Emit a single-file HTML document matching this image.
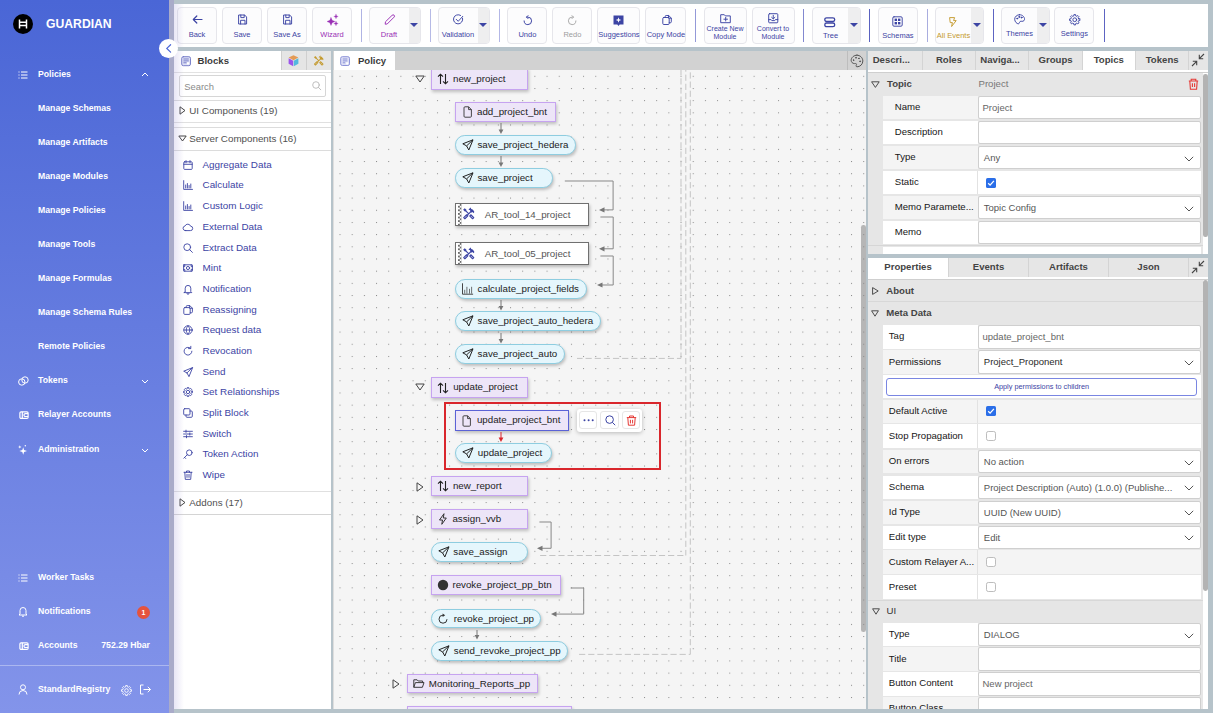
<!DOCTYPE html>
<html><head><meta charset="utf-8"><style>
*{box-sizing:border-box;margin:0;padding:0}
html,body{width:1213px;height:713px;overflow:hidden}
body{position:relative;background:#b6c3ca;font-family:"Liberation Sans",sans-serif;}
.abs{position:absolute}
svg{position:absolute;overflow:visible}
#sb{position:absolute;left:0;top:0;width:169px;height:713px;background:linear-gradient(180deg,#4a66d6 0%,#8394ea 100%);color:#fff}
#sb .it{position:absolute;left:38px;font-weight:bold;font-size:8.7px;line-height:12px;white-space:nowrap;transform:translateY(-6.7px)}
#shadowstrip{position:absolute;left:169px;top:0;width:5px;height:713px;background:#a9abc9}
#tb{position:absolute;left:174px;top:4px;width:1034px;height:43px;background:#fff}
.btn{position:absolute;top:3px;height:36.5px;border:1px solid #e6e6eb;border-radius:4px;background:#fcfcfd;text-align:center;font-size:7.3px;color:#3c44a4;}
.btn .lb{position:absolute;left:0;right:0;top:24px;line-height:8px;white-space:nowrap}
.dd{position:absolute;top:0;right:0;width:11.5px;height:34.5px;background:#eeeeef;border-radius:0 3px 3px 0}
.dd:after{content:"";position:absolute;left:1.8px;top:15px;border-left:4.2px solid transparent;border-right:4.2px solid transparent;border-top:4.8px solid #3c44a4}
.sep{position:absolute;top:5px;width:1px;height:33px;background:#7a80cc}
#blocks{position:absolute;left:174px;top:51px;width:157px;height:658px;background:#fff;overflow:hidden}
#canvas{position:absolute;left:333px;top:51px;width:533px;height:658px;background:#f5f5f5;overflow:hidden}
#rtop{position:absolute;left:868px;top:51px;width:340px;height:203px;background:#e6e6e6;overflow:hidden}
#rbot{position:absolute;left:868px;top:258px;width:340px;height:451px;background:#e6e6e6;overflow:hidden}
</style></head><body>
<div id="sb"><svg style="left:13px;top:14px" width="20" height="20" viewBox="0 0 20 20"><circle cx="10" cy="10" r="10" fill="#000"/><path d="M6.5 5.5v9M13.5 5.5v9M6.5 8.2h7M6.5 11.6h7" stroke="#fff" stroke-width="1.5" fill="none"/></svg>
<div class="abs" style="left:46px;top:17px;font-size:12.2px;font-weight:bold;line-height:14px">GUARDIAN</div>
<svg style="left:18px;top:69.5px" width="10" height="10" viewBox="0 0 10 10" fill="none" stroke="#fff" stroke-width="1"><path d="M3 2h6.5M3 5h6.5M3 8h6.5"/><path d="M0.5 2h1M0.5 5h1M0.5 8h1"/></svg>
<div class="it" style="top:74.5px">Policies</div>
<svg style="left:141px;top:72px" width="8" height="5" viewBox="0 0 8 5" fill="none" stroke="#fff" stroke-width="1"><path d="M1 4l3-3 3 3"/></svg>
<div class="it" style="top:108.8px">Manage Schemas</div>
<div class="it" style="top:142.5px">Manage Artifacts</div>
<div class="it" style="top:176.5px">Manage Modules</div>
<div class="it" style="top:210.5px">Manage Policies</div>
<div class="it" style="top:244.5px">Manage Tools</div>
<div class="it" style="top:278.5px">Manage Formulas</div>
<div class="it" style="top:312.7px">Manage Schema Rules</div>
<div class="it" style="top:347px">Remote Policies</div>
<svg style="left:18px;top:376px" width="11" height="10" viewBox="0 0 11 10" fill="none" stroke="#fff" stroke-width="1"><circle cx="3.8" cy="6" r="3.2"/><circle cx="7" cy="4" r="3.2"/></svg>
<div class="it" style="top:381.2px">Tokens</div>
<svg style="left:141px;top:379px" width="8" height="5" viewBox="0 0 8 5" fill="none" stroke="#fff" stroke-width="1"><path d="M1 1l3 3 3-3"/></svg>
<svg style="left:18.5px;top:410.3px" width="10" height="10" viewBox="0 0 10 10" fill="none" stroke="#fff" stroke-width="1.2"><rect x="0.9" y="1.8" width="8.2" height="6.6" rx="1.2"/><path d="M9.1 3.6H6.4a1.1 1.1 0 0 0 0 2.9h2.7M3.3 1.8v6.6"/></svg>
<div class="it" style="top:415.3px">Relayer Accounts</div>
<svg style="left:18px;top:444px" width="10" height="11" viewBox="0 0 10 11" fill="#fff"><path d="M5.2 3.2L6.1 6.1 9 7 6.1 7.9 5.2 10.8 4.3 7.9 1.4 7 4.3 6.1z"/><path d="M1.8 1.2L2.3 2.4 3.5 2.9 2.3 3.4 1.8 4.6 1.3 3.4 0.1 2.9 1.3 2.4z"/><circle cx="7.3" cy="1.8" r="0.75"/></svg>
<div class="it" style="top:449.5px">Administration</div>
<svg style="left:141px;top:447.5px" width="8" height="5" viewBox="0 0 8 5" fill="none" stroke="#fff" stroke-width="1"><path d="M1 1l3 3 3-3"/></svg>
<svg style="left:18px;top:572.8px" width="10" height="10" viewBox="0 0 10 10" fill="none" stroke="#fff" stroke-width="1"><path d="M3 2h6.5M3 5h6.5M3 8h6.5"/><path d="M0.5 2h1M0.5 5h1M0.5 8h1"/></svg>
<div class="it" style="top:577.8px">Worker Tasks</div>
<svg style="left:18px;top:606px" width="10" height="11" viewBox="0 0 10 11" fill="none" stroke="#fff" stroke-width="1"><path d="M2 8V4.5a3 3 0 0 1 6 0V8l1 1H1z"/><path d="M4 10.2h2"/></svg>
<div class="it" style="top:612px">Notifications</div>
<div class="abs" style="left:137px;top:605.5px;width:13px;height:13px;border-radius:50%;background:#e5533d;font-size:7px;font-weight:bold;text-align:center;line-height:13px">1</div>
<svg style="left:18.5px;top:640.9px" width="10" height="10" viewBox="0 0 10 10" fill="none" stroke="#fff" stroke-width="1.2"><rect x="0.9" y="1.8" width="8.2" height="6.6" rx="1.2"/><path d="M9.1 3.6H6.4a1.1 1.1 0 0 0 0 2.9h2.7M3.3 1.8v6.6"/></svg>
<div class="it" style="top:645.9px">Accounts</div>
<div class="it" style="top:645.9px;left:auto;right:19px">752.29 Hbar</div>
<div class="abs" style="left:0;top:665px;width:169px;height:1px;background:rgba(255,255,255,0.35)"></div>
<svg style="left:18px;top:684px" width="10" height="11" viewBox="0 0 10 11" fill="none" stroke="#fff" stroke-width="1"><circle cx="5" cy="3.3" r="2.5"/><path d="M1 10.5a4 4 0 0 1 8 0"/></svg>
<div class="it" style="top:689.9px">StandardRegistry</div>
<svg style="left:121px;top:684.5px" width="11" height="11" viewBox="0 0 11 11" fill="none" stroke="#fff" stroke-width="0.9"><circle cx="5.5" cy="5.5" r="1.8"/><path d="M10.43 4.68 L10.43 6.32 L9.20 6.36 L8.72 7.51 L9.57 8.41 L8.41 9.57 L7.51 8.72 L6.36 9.20 L6.32 10.43 L4.68 10.43 L4.64 9.20 L3.49 8.72 L2.59 9.57 L1.43 8.41 L2.28 7.51 L1.80 6.36 L0.57 6.32 L0.57 4.68 L1.80 4.64 L2.28 3.49 L1.43 2.59 L2.59 1.43 L3.49 2.28 L4.64 1.80 L4.68 0.57 L6.32 0.57 L6.36 1.80 L7.51 2.28 L8.41 1.43 L9.57 2.59 L8.72 3.49 L9.20 4.64z"/></svg>
<svg style="left:139px;top:684px" width="12" height="11" viewBox="0 0 12 11" fill="none" stroke="#fff" stroke-width="1"><path d="M4.5 1H1.5v9h3"/><path d="M4.5 5.5h7M8.8 2.8l2.7 2.7-2.7 2.7"/></svg>
<div class="abs" style="left:158.8px;top:38.8px;width:19.5px;height:19.5px;border-radius:50%;background:#fff;z-index:5"><svg style="left:7px;top:5.6px" width="6" height="9" viewBox="0 0 6 9" fill="none" stroke="#4a66d6" stroke-width="1.2" stroke-linecap="round"><path d="M4.6 0.7L0.8 4.4 4.6 8.1"/></svg></div></div>
<div id="shadowstrip"></div>
<div id="tb"><div class="btn" style="left:3px;width:40px;color:#3c44a4"><svg style="left:13.50px;top:7.20px" width="11" height="9" viewBox="0 0 11 9" fill="none" stroke="#3c44a4" stroke-width="1.2" stroke-linecap="round" stroke-linejoin="round"><path d="M10 4.5H1.3M4.8 1L1.3 4.5 4.8 8"/></svg><div class="lb" style="top:22.5px;font-size:7.5px;">Back</div></div>
<div class="btn" style="left:48px;width:40px;color:#3c44a4"><svg style="left:14.50px;top:5.90px" width="9.5" height="11" viewBox="0 0 9.5 11" fill="none" stroke="#3c44a4" stroke-width="0.95" stroke-linecap="round" stroke-linejoin="round"><path d="M1 1h5.6l2 2v7H1z"/><path d="M2.8 1v2.6h3.4V1M2.6 10V6.3h4.4V10"/></svg><div class="lb" style="top:22.5px;font-size:7.5px;">Save</div></div>
<div class="btn" style="left:93px;width:40px;color:#3c44a4"><svg style="left:14.50px;top:5.90px" width="9.5" height="11" viewBox="0 0 9.5 11" fill="none" stroke="#3c44a4" stroke-width="0.95" stroke-linecap="round" stroke-linejoin="round"><path d="M1 1h5.6l2 2v7H1z"/><path d="M2.8 1v2.6h3.4V1M2.6 10V6.3h4.4V10"/></svg><div class="lb" style="top:22.5px;font-size:7.5px;">Save As</div></div>
<div class="btn" style="left:138px;width:40px;color:#9a2fb5"><svg style="left:12.50px;top:6.40px" width="13" height="12" viewBox="0 0 13 12" fill="#9a2fb5" stroke="#9a2fb5" stroke-width="0.3" stroke-linecap="round" stroke-linejoin="round"><path d="M5 3.5L6.2 6.3 9 7.5 6.2 8.7 5 11.5 3.8 8.7 1 7.5 3.8 6.3z"/><path d="M10 0.3L10.6 1.9 12.2 2.5 10.6 3.1 10 4.7 9.4 3.1 7.8 2.5 9.4 1.9z"/><path d="M10 7.3L10.6 8.9 12.2 9.5 10.6 10.1 10 11.7 9.4 10.1 7.8 9.5 9.4 8.9z"/></svg><div class="lb" style="top:22.5px;font-size:7.5px;">Wizard</div></div>
<div class="sep" style="left:187px;background:#b0b4e4"></div>
<div class="btn" style="left:195px;width:52px;color:#9a2fb5"><svg style="left:14.00px;top:5.90px" width="11.5" height="11" viewBox="0 0 11.5 11" fill="none" stroke="#9a2fb5" stroke-width="0.95" stroke-linecap="round" stroke-linejoin="round"><path d="M8.2 1.2a1.3 1.3 0 0 1 1.9 1.9L3.2 10 1.2 10.2 1.4 8.2z"/></svg><div class="lb" style="top:22.5px;font-size:7.5px;right:12px;">Draft</div><div class="dd"></div></div>
<div class="sep" style="left:256px;background:#b6bae6"></div>
<div class="btn" style="left:264px;width:52px;color:#3c44a4"><svg style="left:13.80px;top:6.20px" width="11" height="11" viewBox="0 0 11 11" fill="none" stroke="#3c44a4" stroke-width="0.95" stroke-linecap="round" stroke-linejoin="round"><path d="M9.6 4.2A4.6 4.6 0 1 1 7.6 1.4"/><path d="M3.2 5.3l2 2 4.6-5"/></svg><div class="lb" style="top:22.5px;font-size:7.5px;right:12px;">Validation</div><div class="dd"></div></div>
<div class="sep" style="left:324.5px;background:#b3b7e6"></div>
<div class="btn" style="left:333.4px;width:40px;color:#3c44a4"><svg style="left:14.30px;top:6.60px" width="10" height="10.5" viewBox="0 0 10 10.5" fill="none" stroke="#3c44a4" stroke-width="1" stroke-linecap="round" stroke-linejoin="round"><path d="M3.6 2.1H4.8A3.75 3.75 0 1 1 1.1 5.9"/><path d="M5 0.6L3.5 2.1 5 3.6"/></svg><div class="lb" style="top:22.5px;font-size:7.5px;">Undo</div></div>
<div class="btn" style="left:378.4px;width:40px;color:#9d9d9d"><svg style="left:13.80px;top:6.60px" width="10" height="10.5" viewBox="0 0 10 10.5" fill="none" stroke="#ababab" stroke-width="1" stroke-linecap="round" stroke-linejoin="round"><path d="M6.4 2.1H5.2A3.75 3.75 0 1 0 8.9 5.9"/><path d="M5 0.6L6.5 2.1 5 3.6"/></svg><div class="lb" style="top:22.5px;font-size:7.5px;">Redo</div></div>
<div class="btn" style="left:423.3px;width:43px;color:#3c44a4"><svg style="left:15.20px;top:7.40px" width="11" height="11.5" viewBox="0 0 11 11.5" fill="none" stroke="#3c44a4" stroke-width="0.95" stroke-linecap="round" stroke-linejoin="round"><path d="M0.5 0.5h10v9H6.7l-1.2 1.6-1.2-1.6H0.5z" fill="#3c44a4" stroke="none"/><path d="M5.5 2.2L6.2 4.3 8.3 5 6.2 5.7 5.5 7.8 4.8 5.7 2.7 5 4.8 4.3z" fill="#fff" stroke="none"/></svg><div class="lb" style="top:22.5px;font-size:7.5px;">Suggestions</div></div>
<div class="btn" style="left:471.4px;width:41px;color:#3c44a4"><svg style="left:15.20px;top:7.00px" width="10" height="10" viewBox="0 0 10 10" fill="none" stroke="#3c44a4" stroke-width="0.95" stroke-linecap="round" stroke-linejoin="round"><path d="M3.2 2.5V1.5a1 1 0 0 1 1-1h2.5l2.6 2.6v3.7a1 1 0 0 1-1 1H7.2"/><rect x="0.8" y="2.5" width="6.4" height="7" rx="1"/><path d="M6.5 0.6v2.6h2.7"/></svg><div class="lb" style="top:22.5px;font-size:7.5px;">Copy Mode</div></div>
<div class="sep" style="left:521.4px;background:#9499d8"></div>
<div class="btn" style="left:529.5px;width:43px;color:#3c44a4"><svg style="left:15.00px;top:5.70px" width="11" height="9" viewBox="0 0 11 9" fill="none" stroke="#3c44a4" stroke-width="0.95" stroke-linecap="round" stroke-linejoin="round"><path d="M0.7 8.3V0.7h3.6l1 1.2h5v6.4z"/><path d="M5.7 3.4v3.6M3.9 5.2h3.6"/></svg><div class="lb" style="top:16.5px;font-size:7px;">Create New<br>Module</div></div>
<div class="btn" style="left:577.5px;width:43px;color:#3c44a4"><svg style="left:15.20px;top:4.70px" width="10.5" height="10.5" viewBox="0 0 10.5 10.5" fill="none" stroke="#3c44a4" stroke-width="0.95" stroke-linecap="round" stroke-linejoin="round"><rect x="0.7" y="0.7" width="9.1" height="9.1" rx="0.8"/><path d="M5.25 2.3v3.4M3.6 4.3l1.65 1.6 1.65-1.6M0.7 6.6h2.4l0.7 1h2.9l0.7-1h2.4"/></svg><div class="lb" style="top:16.5px;font-size:7px;">Convert to<br>Module</div></div>
<div class="sep" style="left:629.4px;background:#8288d0"></div>
<div class="btn" style="left:638.3px;width:48.5px;color:#3c44a4"><svg style="left:11.20px;top:8.70px" width="11.5" height="10.5" viewBox="0 0 11.5 10.5" fill="none" stroke="#3c44a4" stroke-width="1.3" stroke-linecap="round" stroke-linejoin="round"><rect x="0.8" y="0.8" width="9.9" height="3.7" rx="1.8"/><rect x="0.8" y="6" width="9.9" height="3.7" rx="1.8"/></svg><div class="lb" style="top:23.5px;font-size:7.5px;right:12px;">Tree</div><div class="dd"></div></div>
<div class="sep" style="left:695.4px;background:#5a62c0"></div>
<div class="btn" style="left:704px;width:40px;color:#3c44a4"><svg style="left:12.50px;top:8.20px" width="11" height="11" viewBox="0 0 11 11" fill="none" stroke="#3c44a4" stroke-width="0.95" stroke-linecap="round" stroke-linejoin="round"><rect x="0.8" y="0.8" width="9.4" height="9.4" rx="1.2"/><rect x="2.6" y="2.6" width="2.4" height="2.4" fill="#3c44a4" stroke="none"/><rect x="2.6" y="6" width="2.4" height="2.4" fill="#3c44a4" stroke="none"/><rect x="6" y="2.6" width="2.4" height="2.4" fill="#3c44a4" stroke="none"/><rect x="6" y="6" width="2.4" height="2.4" fill="#3c44a4" stroke="none"/></svg><div class="lb" style="top:24px;font-size:7.5px;">Schemas</div></div>
<div class="sep" style="left:752.8px;background:#a9addf"></div>
<div class="btn" style="left:761.3px;width:48.5px;color:#c49a2e"><svg style="left:13.20px;top:9.20px" width="8" height="10" viewBox="0 0 8 10" fill="none" stroke="#c49a2e" stroke-width="0.95" stroke-linecap="round" stroke-linejoin="round"><path d="M1 0.6h4.6L4.6 3.6h2.6L2.6 9.5 3.4 5.6H1.6z"/></svg><div class="lb" style="top:24px;font-size:7.5px;right:12px;">All Events</div><div class="dd"></div></div>
<div class="sep" style="left:818.7px;background:#5d64c2"></div>
<div class="btn" style="left:827.2px;width:48.5px;color:#3c44a4"><svg style="left:12.10px;top:6.40px" width="11.5" height="10.5" viewBox="0 0 11.5 10.5" fill="none" stroke="#3c44a4" stroke-width="0.95" stroke-linecap="round" stroke-linejoin="round"><path d="M5.6 0.7C2.8 0.7 0.7 2.8 0.7 5.2c0 2.8 2.4 4.6 3.6 4.6 1.2 0 .9-1.5 1.8-2.3.9-.8 2.6.5 3.8-.8 1.2-1.3.6-3-.6-4.4C8.4 1.3 7 .7 5.6.7z"/><circle cx="3.2" cy="4.6" r=".5" fill="#3c44a4"/><circle cx="5.2" cy="2.9" r=".5" fill="#3c44a4"/><circle cx="7.6" cy="3.6" r=".5" fill="#3c44a4"/></svg><div class="lb" style="top:22px;font-size:7.5px;right:12px;">Themes</div><div class="dd"></div></div>
<div class="btn" style="left:880.4px;width:40px;color:#3c44a4"><svg style="left:13.90px;top:5.90px" width="11.5" height="11.5" viewBox="0 0 11.5 11.5" fill="none" stroke="#3c44a4" stroke-width="0.95" stroke-linecap="round" stroke-linejoin="round"><circle cx="5.75" cy="5.75" r="1.9"/><path d="M10.88 4.90 L10.88 6.60 L9.65 6.65 L9.14 7.87 L9.98 8.77 L8.77 9.98 L7.87 9.14 L6.65 9.65 L6.60 10.88 L4.90 10.88 L4.85 9.65 L3.63 9.14 L2.73 9.98 L1.52 8.77 L2.36 7.87 L1.85 6.65 L0.62 6.60 L0.62 4.90 L1.85 4.85 L2.36 3.63 L1.52 2.73 L2.73 1.52 L3.63 2.36 L4.85 1.85 L4.90 0.62 L6.60 0.62 L6.65 1.85 L7.87 2.36 L8.77 1.52 L9.98 2.73 L9.14 3.63 L9.65 4.85z"/></svg><div class="lb" style="top:22px;font-size:7.5px;">Settings</div></div>
<div class="sep" style="left:929.5px;background:#5d64c2"></div>
<div class="abs" style="left:0;top:0;width:10px;height:43px;background:linear-gradient(90deg,rgba(150,140,210,0.22),rgba(150,140,210,0))"></div></div>
<div id="blocks"><svg style="left:7.00px;top:5.20px" width="10.2" height="10.4" viewBox="0 0 10.2 10.4" fill="#dfe1f5" stroke="#6d74c4" stroke-width="0.9" stroke-linecap="round" stroke-linejoin="round"><rect x="0.7" y="0.7" width="8.8" height="9" rx="1.6"/><path d="M2.8 3h4.6M2.8 4.9h4.6M2.8 6.8h2.4"/><rect x="6" y="6.4" width="2" height="2" fill="#fff" stroke="none"/></svg>
<div class="abs" style="left:23.5px;top:2.7px;font-size:9.6px;font-weight:bold;color:#3a3a3a;line-height:13px">Blocks</div>
<div class="abs" style="left:107px;top:0;width:25px;height:19px;background:#e5e5e5;border-left:1px solid #cfcfcf"></div>
<div class="abs" style="left:132px;top:0;width:25px;height:19px;background:#e5e5e5;border-left:1px solid #cfcfcf"></div>
<svg style="left:114px;top:3.8px" width="11" height="11.5" viewBox="0 0 11 11.5"><path d="M5.5 0.3L10.4 2.6 5.5 5.2 0.6 2.6z" fill="#e39a55"/><path d="M0.6 3.2L5.2 5.7V11.2L0.6 8.7z" fill="#9c55ea"/><path d="M5.8 5.7L10.4 3.2V8.7L5.8 11.2z" fill="#52b9df"/></svg>
<svg style="left:138.5px;top:4px" width="11.5" height="11.5" viewBox="0 0 24 24"><path d="M21.67 18.17l-5.3-5.3h-.99l-2.54 2.54v.99l5.3 5.3c.39.39 1.02.39 1.41 0l2.12-2.12c.39-.39.39-1.03 0-1.41z M17.34 10.19l1.41-1.41 2.12 2.12c1.17-1.17 1.17-3.07 0-4.24l-3.54-3.54-1.41 1.41V1.71L15.22 1l-3.54 3.54.71.71h2.83l-1.41 1.41 1.06 1.06-2.89 2.89-4.13-4.13V5.06L4.83 2.04 2 4.87l3.03 3.03h1.41l4.13 4.13-.85.85H7.6l-5.3 5.3c-.39.39-.39 1.02 0 1.41l2.12 2.12c.39.39 1.02.39 1.41 0l5.3-5.3v-2.12l5.15-5.15z" fill="#c49a2e"/><path d="M15.6 15.9l3.6 3.6M4.6 19.4l3.6-3.6" stroke="#e5e5e5" stroke-width="1.1" fill="none"/></svg>
<div class="abs" style="left:0;top:21px;width:157px;height:1px;background:#e2e2e2"></div>
<div class="abs" style="left:5.3px;top:24.4px;width:146.3px;height:22px;border:1px solid #d6d6d6;border-radius:2px;background:#fff"></div>
<div class="abs" style="left:10.3px;top:30px;font-size:9.4px;color:#8a8a8a;line-height:11px">Search</div>
<svg style="left:138.20px;top:30.20px" width="9.5" height="9.5" viewBox="0 0 9.5 9.5" fill="none" stroke="#b8b8b8" stroke-width="0.9" stroke-linecap="round" stroke-linejoin="round"><circle cx="4" cy="4" r="3.3"/><path d="M6.4 6.4l2.4 2.4"/></svg>
<div class="abs" style="left:0;top:48.5px;width:157px;height:1px;background:#dcdcdc"></div>
<svg style="left:4.5px;top:55px" width="7" height="9" viewBox="0 0 7 9" fill="none" stroke="#444" stroke-width="1"><path d="M1 0.8L6 4.5 1 8.2z"/></svg>
<div class="abs" style="left:15.3px;top:53.5px;font-size:9.8px;color:#505050;line-height:12px">UI Components (19)</div>
<div class="abs" style="left:0;top:71px;width:157px;height:1px;background:#e0e0e0"></div>
<div class="abs" style="left:0;top:76px;width:157px;height:1px;background:#dcdcdc"></div>
<svg style="left:4px;top:84px" width="9" height="7" viewBox="0 0 9 7" fill="none" stroke="#444" stroke-width="1"><path d="M0.8 1L8.2 1 4.5 6z"/></svg>
<div class="abs" style="left:15.3px;top:81.5px;font-size:9.8px;color:#505050;line-height:12px">Server Components (16)</div>
<div class="abs" style="left:0;top:99px;width:157px;height:1px;background:#dcdcdc"></div>
<svg style="left:9.00px;top:108.80px" width="10" height="10" viewBox="0 0 10 10" fill="none" stroke="#3c44a4" stroke-width="0.9" stroke-linecap="round" stroke-linejoin="round"><rect x="0.8" y="1.8" width="8.4" height="7.6" rx="0.8"/><path d="M0.8 4.3h8.4M3 0.6v2.2M7 0.6v2.2"/></svg>
<div class="abs" style="left:28.5px;top:107.80px;font-size:9.9px;color:#3c44a4;line-height:12px;white-space:nowrap">Aggregate Data</div>
<svg style="left:9.00px;top:129.48px" width="10" height="10" viewBox="0 0 10 10" fill="none" stroke="#3c44a4" stroke-width="0.9" stroke-linecap="round" stroke-linejoin="round"><path d="M0.7 0.6v8.8h8.8M2.7 8V5M4.4 8V3.5M6.1 8V5.5M7.8 8V4"/></svg>
<div class="abs" style="left:28.5px;top:128.48px;font-size:9.9px;color:#3c44a4;line-height:12px;white-space:nowrap">Calculate</div>
<svg style="left:9.00px;top:150.16px" width="10" height="10" viewBox="0 0 10 10" fill="none" stroke="#3c44a4" stroke-width="0.9" stroke-linecap="round" stroke-linejoin="round"><path d="M0.7 0.6v8.8h8.8M2.7 8V5M4.4 8V3.5M6.1 8V5.5M7.8 8V4"/></svg>
<div class="abs" style="left:28.5px;top:149.16px;font-size:9.9px;color:#3c44a4;line-height:12px;white-space:nowrap">Custom Logic</div>
<svg style="left:9.00px;top:170.84px" width="10" height="10" viewBox="0 0 10 10" fill="none" stroke="#3c44a4" stroke-width="0.9" stroke-linecap="round" stroke-linejoin="round"><path d="M2.8 8.6h4.6a2.2 2.2 0 0 0 .2-4.4A3 3 0 0 0 2 4a2.3 2.3 0 0 0 .8 4.6z"/></svg>
<div class="abs" style="left:28.5px;top:169.84px;font-size:9.9px;color:#3c44a4;line-height:12px;white-space:nowrap">External Data</div>
<svg style="left:9.00px;top:191.52px" width="10" height="10" viewBox="0 0 10 10" fill="none" stroke="#3c44a4" stroke-width="0.9" stroke-linecap="round" stroke-linejoin="round"><circle cx="4.2" cy="4.2" r="3.4"/><path d="M6.7 6.7l2.7 2.7"/></svg>
<div class="abs" style="left:28.5px;top:190.52px;font-size:9.9px;color:#3c44a4;line-height:12px;white-space:nowrap">Extract Data</div>
<svg style="left:9.00px;top:212.20px" width="10" height="10" viewBox="0 0 10 10" fill="none" stroke="#3c44a4" stroke-width="0.9" stroke-linecap="round" stroke-linejoin="round"><rect x="0.6" y="1.8" width="8.8" height="6.4" rx="0.3"/><circle cx="5" cy="5" r="1.6"/><path d="M0.6 3.6h1.2V1.8M8.2 1.8v1.8h1.2M0.6 6.4h1.2v1.8M8.2 8.2V6.4h1.2"/></svg>
<div class="abs" style="left:28.5px;top:211.20px;font-size:9.9px;color:#3c44a4;line-height:12px;white-space:nowrap">Mint</div>
<svg style="left:9.00px;top:232.88px" width="10" height="10" viewBox="0 0 10 10" fill="none" stroke="#3c44a4" stroke-width="0.9" stroke-linecap="round" stroke-linejoin="round"><path d="M2.2 7.6V4.2a2.8 2.8 0 0 1 5.6 0v3.4l1 1H1.2z"/><path d="M4 9.4a1 1 0 0 0 2 0"/></svg>
<div class="abs" style="left:28.5px;top:231.88px;font-size:9.9px;color:#3c44a4;line-height:12px;white-space:nowrap">Notification</div>
<svg style="left:9.00px;top:253.56px" width="10" height="10" viewBox="0 0 10 10" fill="none" stroke="#3c44a4" stroke-width="0.9" stroke-linecap="round" stroke-linejoin="round"><path d="M3.2 2.6V1.6a1 1 0 0 1 1-1h2.6l2.6 2.6v3.6a1 1 0 0 1-1 1H7.2"/><rect x="0.8" y="2.6" width="6.4" height="6.8" rx="1"/><path d="M6.6 0.7v2.6h2.7"/></svg>
<div class="abs" style="left:28.5px;top:252.56px;font-size:9.9px;color:#3c44a4;line-height:12px;white-space:nowrap">Reassigning</div>
<svg style="left:9.00px;top:274.24px" width="10" height="10" viewBox="0 0 10 10" fill="none" stroke="#3c44a4" stroke-width="0.9" stroke-linecap="round" stroke-linejoin="round"><circle cx="5" cy="5" r="4.2"/><path d="M0.8 5h8.4M5 0.8c-2.4 2.4-2.4 6 0 8.4M5 0.8c2.4 2.4 2.4 6 0 8.4"/></svg>
<div class="abs" style="left:28.5px;top:273.24px;font-size:9.9px;color:#3c44a4;line-height:12px;white-space:nowrap">Request data</div>
<svg style="left:9.00px;top:294.92px" width="10" height="10" viewBox="0 0 10 10" fill="none" stroke="#3c44a4" stroke-width="0.9" stroke-linecap="round" stroke-linejoin="round"><path d="M8.9 5.2A3.9 3.9 0 1 1 7.4 2.1"/><path d="M7.8 0.3v2.3H5.5"/></svg>
<div class="abs" style="left:28.5px;top:293.92px;font-size:9.9px;color:#3c44a4;line-height:12px;white-space:nowrap">Revocation</div>
<svg style="left:9.00px;top:315.60px" width="10" height="10" viewBox="0 0 10 10" fill="none" stroke="#3c44a4" stroke-width="0.9" stroke-linecap="round" stroke-linejoin="round"><path d="M9.3 0.7L0.7 4.2 4 5.9 5.8 9.3z"/><path d="M4 5.9l5.3-5.2"/></svg>
<div class="abs" style="left:28.5px;top:314.60px;font-size:9.9px;color:#3c44a4;line-height:12px;white-space:nowrap">Send</div>
<svg style="left:9.00px;top:336.28px" width="10" height="10" viewBox="0 0 10 10" fill="none" stroke="#3c44a4" stroke-width="0.9" stroke-linecap="round" stroke-linejoin="round"><circle cx="5" cy="5" r="1.7"/><path d="M9.44 4.26 L9.44 5.74 L8.31 5.77 L7.88 6.80 L8.66 7.62 L7.62 8.66 L6.80 7.88 L5.77 8.31 L5.74 9.44 L4.26 9.44 L4.23 8.31 L3.20 7.88 L2.38 8.66 L1.34 7.62 L2.12 6.80 L1.69 5.77 L0.56 5.74 L0.56 4.26 L1.69 4.23 L2.12 3.20 L1.34 2.38 L2.38 1.34 L3.20 2.12 L4.23 1.69 L4.26 0.56 L5.74 0.56 L5.77 1.69 L6.80 2.12 L7.62 1.34 L8.66 2.38 L7.88 3.20 L8.31 4.23z"/></svg>
<div class="abs" style="left:28.5px;top:335.28px;font-size:9.9px;color:#3c44a4;line-height:12px;white-space:nowrap">Set Relationships</div>
<svg style="left:9.00px;top:356.96px" width="10" height="10" viewBox="0 0 10 10" fill="none" stroke="#3c44a4" stroke-width="0.9" stroke-linecap="round" stroke-linejoin="round"><rect x="0.7" y="0.7" width="6.3" height="6.3" rx="1"/><path d="M7 3h1.3a1 1 0 0 1 1 1v4.3a1 1 0 0 1-1 1H4a1 1 0 0 1-1-1V7"/></svg>
<div class="abs" style="left:28.5px;top:355.96px;font-size:9.9px;color:#3c44a4;line-height:12px;white-space:nowrap">Split Block</div>
<svg style="left:9.00px;top:377.64px" width="10" height="10" viewBox="0 0 10 10" fill="none" stroke="#3c44a4" stroke-width="0.9" stroke-linecap="round" stroke-linejoin="round"><path d="M0.6 2.3h8.8M0.6 5h8.8M0.6 7.7h8.8"/><path d="M3 1.2v2.2M6.8 3.9v2.2M3.5 6.6v2.2"/></svg>
<div class="abs" style="left:28.5px;top:376.64px;font-size:9.9px;color:#3c44a4;line-height:12px;white-space:nowrap">Switch</div>
<svg style="left:9.00px;top:398.32px" width="10" height="10" viewBox="0 0 10 10" fill="none" stroke="#3c44a4" stroke-width="0.9" stroke-linecap="round" stroke-linejoin="round"><circle cx="6.3" cy="3.7" r="2.8"/><path d="M4.3 5.7L0.8 9.2M1.6 8.4l1.1 1.1"/></svg>
<div class="abs" style="left:28.5px;top:397.32px;font-size:9.9px;color:#3c44a4;line-height:12px;white-space:nowrap">Token Action</div>
<svg style="left:9.00px;top:419.00px" width="10" height="10" viewBox="0 0 10 10" fill="none" stroke="#3c44a4" stroke-width="0.9" stroke-linecap="round" stroke-linejoin="round"><path d="M1 2.3h8M3.5 2.3V1h3v1.3M1.8 2.3l.5 7.1h5.4l.5-7.1M4 4.4v3M6 4.4v3"/></svg>
<div class="abs" style="left:28.5px;top:418.00px;font-size:9.9px;color:#3c44a4;line-height:12px;white-space:nowrap">Wipe</div>
<div class="abs" style="left:0;top:440px;width:157px;height:1px;background:#e0e0e0"></div>
<svg style="left:4.5px;top:447px" width="7" height="9" viewBox="0 0 7 9" fill="none" stroke="#444" stroke-width="1"><path d="M1 0.8L6 4.5 1 8.2z"/></svg>
<div class="abs" style="left:15.3px;top:445.5px;font-size:9.8px;color:#505050;line-height:12px">Addons (17)</div>
<div class="abs" style="left:0;top:463px;width:157px;height:1px;background:#d4d4d4"></div>
<div class="abs" style="left:0;top:0;width:10px;height:658px;background:linear-gradient(90deg,rgba(150,140,210,0.22),rgba(150,140,210,0))"></div></div>
<div id="canvas"><svg style="left:0;top:19px" width="533" height="639"><defs><pattern id="g" patternUnits="userSpaceOnUse" width="12.18" height="12.18" x="6.5" y="5.8"><rect x="0" y="0" width="1" height="1" fill="#8a8a8a"/></pattern></defs><rect width="533" height="639" fill="url(#g)"/></svg>
<div class="abs" style="left:0;top:19px;width:1px;height:639px;background:#dedede"></div>
<svg style="left:243.90px;top:19.00px" width="106.0" height="290.4" viewBox="576.9 70 106.0 290.4"><path d="M680.9 70V358.4" stroke="#c4c4c4" stroke-width="1" fill="none" stroke-dasharray="6.2 2.94" stroke-dashoffset="0.86"/><path d="M680.9 358.4H576.9" stroke="#c4c4c4" stroke-width="1" fill="none" stroke-dasharray="6.2 2.94" stroke-dashoffset="2.14"/></svg>
<svg style="left:206.70px;top:19.00px" width="147.8" height="487.5" viewBox="539.7 70 147.8 487.5"><path d="M685.5 70V555.5" stroke="#c4c4c4" stroke-width="1" fill="none" stroke-dasharray="6.2 2.94" stroke-dashoffset="4.52"/><path d="M685.5 555.5H539.7" stroke="#c4c4c4" stroke-width="1" fill="none" stroke-dasharray="6.2 2.94" stroke-dashoffset="6.74"/></svg>
<svg style="left:246.20px;top:19.00px" width="113.3" height="586.4" viewBox="579.2 70 113.3 586.4"><path d="M690.5 70V654.4" stroke="#c4c4c4" stroke-width="1" fill="none" stroke-dasharray="6.2 2.94" stroke-dashoffset="6.76"/><path d="M690.5 654.4H579.2" stroke="#c4c4c4" stroke-width="1" fill="none" stroke-dasharray="6.2 2.94" stroke-dashoffset="4.64"/></svg>
<svg style="left:82.00px;top:23.80px" width="10" height="8" viewBox="0 0 10 8"><path d="M0.8 1h8.4L5 7z" fill="none" stroke="#444" stroke-width="1"/></svg>
<div class="abs" style="left:98.00px;top:17.00px;width:97.30px;height:21.50px;border:1.7px solid #c6a3f0;background:#ede5f8;box-shadow:1px 2px 3px rgba(0,0,0,0.22)"></div><svg style="left:104.00px;top:21.75px" width="12" height="12" viewBox="0 0 12 12"><path d="M3.5 11V1.2M1 3.7l2.5-2.5L6 3.7M8.5 1v9.8M6 8.3l2.5 2.5L11 8.3" fill="none" stroke="#222" stroke-width="1.1"/></svg><div class="abs" style="left:120.00px;top:17.00px;height:21.50px;line-height:21.50px;font-size:9.75px;color:#222;white-space:nowrap">new_project</div>
<div class="abs" style="left:122.00px;top:51.00px;width:101.00px;height:20.00px;border:1.7px solid #c6a3f0;background:#ede5f8;box-shadow:1px 2px 3px rgba(0,0,0,0.22)"></div><svg style="left:129.50px;top:55.00px" width="10" height="12" viewBox="0 0 10 12"><path d="M1 1.8a1 1 0 0 1 1-1h3.6l2.8 2.8v6.6a1 1 0 0 1-1 1H2a1 1 0 0 1-1-1z M5.6 0.8v2.8h2.8" fill="none" stroke="#333" stroke-width="0.9"/></svg><div class="abs" style="left:144.00px;top:51.00px;height:20.00px;line-height:20.00px;font-size:9.75px;color:#222;white-space:nowrap">add_project_bnt</div>
<svg style="left:164.00px;top:72.00px" width="8" height="12.0"><path d="M4 0V8.0" stroke="#777" stroke-width="1" fill="none"/><path d="M1.6 6.5L4 11.0L6.4 6.5z" fill="#777"/></svg>
<div class="abs" style="left:122.00px;top:84.00px;width:121.20px;height:19.70px;border:1.8px solid #8ecde0;background:#e5f6fc;border-radius:9.8px;box-shadow:1px 2px 3px rgba(0,0,0,0.22)"></div><svg style="left:129.00px;top:87.85px" width="12" height="12" viewBox="0 0 12 12"><path d="M11 0.8L0.8 4.8 4.6 6.9 6.8 11z M4.6 6.9L11 0.8" fill="none" stroke="#222" stroke-width="1" stroke-linejoin="round"/></svg><div class="abs" style="left:144.40px;top:84.00px;height:19.70px;line-height:19.70px;font-size:9.75px;color:#222;white-space:nowrap">save_project_hedera</div>
<svg style="left:164.00px;top:105.00px" width="8" height="12.0"><path d="M4 0V8.0" stroke="#777" stroke-width="1" fill="none"/><path d="M1.6 6.5L4 11.0L6.4 6.5z" fill="#777"/></svg>
<div class="abs" style="left:122.00px;top:117.00px;width:97.50px;height:19.70px;border:1.8px solid #8ecde0;background:#e5f6fc;border-radius:9.8px;box-shadow:1px 2px 3px rgba(0,0,0,0.22)"></div><svg style="left:129.00px;top:120.85px" width="12" height="12" viewBox="0 0 12 12"><path d="M11 0.8L0.8 4.8 4.6 6.9 6.8 11z M4.6 6.9L11 0.8" fill="none" stroke="#222" stroke-width="1" stroke-linejoin="round"/></svg><div class="abs" style="left:144.40px;top:117.00px;height:19.70px;line-height:19.70px;font-size:9.75px;color:#222;white-space:nowrap">save_project</div>
<svg style="left:265.60px;top:129.20px" width="16.1" height="34.9" viewBox="598.6 180.2 16.1 34.9"><path d="M564.4 181.2H612.7V210.1H603.6" stroke="#888" stroke-width="1" fill="none"/><path d="M598.6 210.1l5.5 -2.6v5.2z" fill="#777"/></svg>
<div class="abs" style="left:122.20px;top:152.20px;width:133.70px;height:23.10px;border:1px solid #707070;border-left-width:1.4px;background:#fff;box-shadow:1px 2px 3px rgba(0,0,0,0.25)"></div><svg style="left:125.30px;top:153.20px" width="3.6" height="21.10"><defs><pattern id="ck" patternUnits="userSpaceOnUse" width="3.6" height="3.6"><rect x="0" y="1.8" width="1.8" height="1.8" fill="#6a6a6a"/><rect x="1.8" y="0" width="1.8" height="1.8" fill="#6a6a6a"/></pattern></defs><rect width="3.6" height="21.10" fill="url(#ck)"/></svg><svg style="left:129.40px;top:156.45px" width="13.5" height="13.5" viewBox="0 0 24 24"><path d="M21.67 18.17l-5.3-5.3h-.99l-2.54 2.54v.99l5.3 5.3c.39.39 1.02.39 1.41 0l2.12-2.12c.39-.39.39-1.03 0-1.41z M17.34 10.19l1.41-1.41 2.12 2.12c1.17-1.17 1.17-3.07 0-4.24l-3.54-3.54-1.41 1.41V1.71L15.22 1l-3.54 3.54.71.71h2.83l-1.41 1.41 1.06 1.06-2.89 2.89-4.13-4.13V5.06L4.83 2.04 2 4.87l3.03 3.03h1.41l4.13 4.13-.85.85H7.6l-5.3 5.3c-.39.39-.39 1.02 0 1.41l2.12 2.12c.39.39 1.02.39 1.41 0l5.3-5.3v-2.12l5.15-5.15z" fill="#3c44a4"/><path d="M15.6 15.9l3.6 3.6M4.6 19.4l3.6-3.6" stroke="#fff" stroke-width="1.1" fill="none"/></svg><div class="abs" style="left:151.80px;top:152.20px;height:23.10px;line-height:23.10px;font-size:9.75px;color:#555;white-space:nowrap">AR_tool_14_project</div>
<svg style="left:265.60px;top:165.20px" width="16.2" height="37.8" viewBox="598.6 216.2 16.2 37.8"><path d="M600 217.2H612.8V249H603.6" stroke="#888" stroke-width="1" fill="none"/><path d="M598.6 249l5.5 -2.6v5.2z" fill="#777"/></svg>
<div class="abs" style="left:122.20px;top:191.40px;width:133.70px;height:23.10px;border:1px solid #707070;border-left-width:1.4px;background:#fff;box-shadow:1px 2px 3px rgba(0,0,0,0.25)"></div><svg style="left:125.30px;top:192.40px" width="3.6" height="21.10"><defs><pattern id="ck" patternUnits="userSpaceOnUse" width="3.6" height="3.6"><rect x="0" y="1.8" width="1.8" height="1.8" fill="#6a6a6a"/><rect x="1.8" y="0" width="1.8" height="1.8" fill="#6a6a6a"/></pattern></defs><rect width="3.6" height="21.10" fill="url(#ck)"/></svg><svg style="left:129.40px;top:195.65px" width="13.5" height="13.5" viewBox="0 0 24 24"><path d="M21.67 18.17l-5.3-5.3h-.99l-2.54 2.54v.99l5.3 5.3c.39.39 1.02.39 1.41 0l2.12-2.12c.39-.39.39-1.03 0-1.41z M17.34 10.19l1.41-1.41 2.12 2.12c1.17-1.17 1.17-3.07 0-4.24l-3.54-3.54-1.41 1.41V1.71L15.22 1l-3.54 3.54.71.71h2.83l-1.41 1.41 1.06 1.06-2.89 2.89-4.13-4.13V5.06L4.83 2.04 2 4.87l3.03 3.03h1.41l4.13 4.13-.85.85H7.6l-5.3 5.3c-.39.39-.39 1.02 0 1.41l2.12 2.12c.39.39 1.02.39 1.41 0l5.3-5.3v-2.12l5.15-5.15z" fill="#3c44a4"/><path d="M15.6 15.9l3.6 3.6M4.6 19.4l3.6-3.6" stroke="#fff" stroke-width="1.1" fill="none"/></svg><div class="abs" style="left:151.80px;top:191.40px;height:23.10px;line-height:23.10px;font-size:9.75px;color:#555;white-space:nowrap">AR_tool_05_project</div>
<svg style="left:263.60px;top:204.30px" width="18.2" height="35.0" viewBox="596.6 255.3 18.2 35.0"><path d="M600 256.3H612.8V285.3H601.6" stroke="#888" stroke-width="1" fill="none"/><path d="M596.6 285.3l5.5 -2.6v5.2z" fill="#777"/></svg>
<div class="abs" style="left:122.20px;top:228.00px;width:131.50px;height:20.00px;border:1.8px solid #8ecde0;background:#e5f6fc;border-radius:10.0px;box-shadow:1px 2px 3px rgba(0,0,0,0.22)"></div><svg style="left:129.20px;top:232.00px" width="12" height="12" viewBox="0 0 12 12"><path d="M0.5 0.3v10.9h10.6" fill="none" stroke="#333" stroke-width="0.9"/><path d="M2.7 10.6V6.8M4.9 10.6V3.8M7.5 10.6V5.8M9.6 10.6V3.8" fill="none" stroke="#444" stroke-width="0.75"/></svg><div class="abs" style="left:144.60px;top:228.00px;height:20.00px;line-height:20.00px;font-size:9.75px;color:#222;white-space:nowrap">calculate_project_fields</div>
<svg style="left:164.00px;top:249.00px" width="8" height="11.6"><path d="M4 0V7.6" stroke="#777" stroke-width="1" fill="none"/><path d="M1.6 6.1L4 10.6L6.4 6.1z" fill="#777"/></svg>
<div class="abs" style="left:122.20px;top:260.40px;width:145.60px;height:20.10px;border:1.8px solid #8ecde0;background:#e5f6fc;border-radius:10.1px;box-shadow:1px 2px 3px rgba(0,0,0,0.22)"></div><svg style="left:129.20px;top:264.45px" width="12" height="12" viewBox="0 0 12 12"><path d="M11 0.8L0.8 4.8 4.6 6.9 6.8 11z M4.6 6.9L11 0.8" fill="none" stroke="#222" stroke-width="1" stroke-linejoin="round"/></svg><div class="abs" style="left:144.60px;top:260.40px;height:20.10px;line-height:20.10px;font-size:9.75px;color:#222;white-space:nowrap">save_project_auto_hedera</div>
<svg style="left:164.00px;top:282.00px" width="8" height="11.6"><path d="M4 0V7.6" stroke="#777" stroke-width="1" fill="none"/><path d="M1.6 6.1L4 10.6L6.4 6.1z" fill="#777"/></svg>
<div class="abs" style="left:122.20px;top:293.40px;width:110.10px;height:20.10px;border:1.8px solid #8ecde0;background:#e5f6fc;border-radius:10.1px;box-shadow:1px 2px 3px rgba(0,0,0,0.22)"></div><svg style="left:129.20px;top:297.45px" width="12" height="12" viewBox="0 0 12 12"><path d="M11 0.8L0.8 4.8 4.6 6.9 6.8 11z M4.6 6.9L11 0.8" fill="none" stroke="#222" stroke-width="1" stroke-linejoin="round"/></svg><div class="abs" style="left:144.60px;top:293.40px;height:20.10px;line-height:20.10px;font-size:9.75px;color:#222;white-space:nowrap">save_project_auto</div>
<svg style="left:82.00px;top:331.60px" width="10" height="8" viewBox="0 0 10 8"><path d="M0.8 1h8.4L5 7z" fill="none" stroke="#444" stroke-width="1"/></svg>
<div class="abs" style="left:98.20px;top:326.40px;width:96.90px;height:20.30px;border:1.7px solid #c6a3f0;background:#ede5f8;box-shadow:1px 2px 3px rgba(0,0,0,0.22)"></div><svg style="left:104.20px;top:330.55px" width="12" height="12" viewBox="0 0 12 12"><path d="M3.5 11V1.2M1 3.7l2.5-2.5L6 3.7M8.5 1v9.8M6 8.3l2.5 2.5L11 8.3" fill="none" stroke="#222" stroke-width="1.1"/></svg><div class="abs" style="left:120.20px;top:326.40px;height:20.30px;line-height:20.30px;font-size:9.75px;color:#222;white-space:nowrap">update_project</div>
<div class="abs" style="left:111.30px;top:351.30px;width:216.5px;height:67.4px;border:2px solid #d9262c"></div>
<div class="abs" style="left:121.90px;top:359.40px;width:114.30px;height:20.80px;border:1.7px solid #5b62d6;background:#ede5f8;box-shadow:1px 2px 3px rgba(0,0,0,0.22)"></div><svg style="left:129.40px;top:363.80px" width="10" height="12" viewBox="0 0 10 12"><path d="M1 1.8a1 1 0 0 1 1-1h3.6l2.8 2.8v6.6a1 1 0 0 1-1 1H2a1 1 0 0 1-1-1z M5.6 0.8v2.8h2.8" fill="none" stroke="#333" stroke-width="0.9"/></svg><div class="abs" style="left:143.90px;top:359.40px;height:20.80px;line-height:20.80px;font-size:9.75px;color:#222;white-space:nowrap">update_project_bnt</div>
<svg style="left:163.90px;top:381.00px" width="8" height="11.0"><path d="M4 0V7.0" stroke="#d9262c" stroke-width="1" fill="none"/><path d="M1.6 5.5L4 10.0L6.4 5.5z" fill="#d9262c"/></svg>
<div class="abs" style="left:122.40px;top:392.40px;width:97.00px;height:20.10px;border:1.8px solid #8ecde0;background:#e5f6fc;border-radius:10.1px;box-shadow:1px 2px 3px rgba(0,0,0,0.22)"></div><svg style="left:129.40px;top:396.45px" width="12" height="12" viewBox="0 0 12 12"><path d="M11 0.8L0.8 4.8 4.6 6.9 6.8 11z M4.6 6.9L11 0.8" fill="none" stroke="#222" stroke-width="1" stroke-linejoin="round"/></svg><div class="abs" style="left:144.80px;top:392.40px;height:20.10px;line-height:20.10px;font-size:9.75px;color:#222;white-space:nowrap">update_project</div>
<div class="abs" style="left:244.00px;top:357.50px;width:65.3px;height:23px;background:#fff;border-radius:3px;box-shadow:0 1px 4px rgba(0,0,0,0.25)"></div>
<div class="abs" style="left:246.30px;top:360.10px;width:18.2px;height:18.2px;border:1px solid #e6e6e6;border-radius:3px;background:#fff"></div>
<div class="abs" style="left:267.40px;top:360.10px;width:18.2px;height:18.2px;border:1px solid #e6e6e6;border-radius:3px;background:#fff"></div>
<div class="abs" style="left:288.90px;top:360.10px;width:18.2px;height:18.2px;border:1px solid #e6e6e6;border-radius:3px;background:#fff"></div>
<svg style="left:250.00px;top:367.50px" width="11" height="3"><circle cx="1.5" cy="1.3" r="1" fill="#3c44a4"/><circle cx="5.6" cy="1.3" r="1" fill="#3c44a4"/><circle cx="9.7" cy="1.3" r="1" fill="#3c44a4"/></svg>
<svg style="left:271.50px;top:363.50px" width="11" height="11" viewBox="0 0 11 11"><circle cx="4.6" cy="4.6" r="3.8" fill="none" stroke="#3c44a4" stroke-width="1"/><path d="M7.4 7.4l2.8 2.8" stroke="#3c44a4" stroke-width="1"/></svg>
<svg style="left:292.50px;top:363.80px" width="11" height="11" viewBox="0 0 11 11" fill="none" stroke="#e53935" stroke-width="1"><path d="M0.8 2.6h9.4M3.5 2.6V1h4v1.6M1.8 2.6l.6 7.6h6.2l.6-7.6"/><path d="M4.4 4.8v3.6M6.6 4.8v3.6"/></svg>
<svg style="left:83.00px;top:430.80px" width="8" height="10" viewBox="0 0 8 10"><path d="M1 0.8v8.4L7 5z" fill="none" stroke="#444" stroke-width="1"/></svg>
<div class="abs" style="left:97.90px;top:425.20px;width:97.20px;height:19.80px;border:1.7px solid #c6a3f0;background:#ede5f8;box-shadow:1px 2px 3px rgba(0,0,0,0.22)"></div><svg style="left:103.90px;top:429.10px" width="12" height="12" viewBox="0 0 12 12"><path d="M3.5 11V1.2M1 3.7l2.5-2.5L6 3.7M8.5 1v9.8M6 8.3l2.5 2.5L11 8.3" fill="none" stroke="#222" stroke-width="1.1"/></svg><div class="abs" style="left:119.90px;top:425.20px;height:19.80px;line-height:19.80px;font-size:9.75px;color:#222;white-space:nowrap">new_report</div>
<svg style="left:83.00px;top:463.50px" width="8" height="10" viewBox="0 0 8 10"><path d="M1 0.8v8.4L7 5z" fill="none" stroke="#444" stroke-width="1"/></svg>
<div class="abs" style="left:97.90px;top:458.10px;width:97.20px;height:19.80px;border:1.7px solid #c6a3f0;background:#ede5f8;box-shadow:1px 2px 3px rgba(0,0,0,0.22)"></div><svg style="left:104.40px;top:462.00px" width="12" height="12" viewBox="0 0 12 12"><path d="M7 0.7L2.5 7h3L4.8 11.3 9.3 5H6.3z" fill="none" stroke="#333" stroke-width="1" stroke-linejoin="round"/></svg><div class="abs" style="left:119.40px;top:458.10px;height:19.80px;line-height:19.80px;font-size:9.75px;color:#222;white-space:nowrap">assign_vvb</div>
<svg style="left:204.30px;top:470.40px" width="16.1" height="32.3" viewBox="537.3 521.4 16.1 32.3"><path d="M539.7 522.4H551.4V548.7H542.3" stroke="#888" stroke-width="1" fill="none"/><path d="M537.3 548.7l5.5 -2.6v5.2z" fill="#777"/></svg>
<div class="abs" style="left:97.90px;top:491.20px;width:97.20px;height:19.80px;border:1.8px solid #8ecde0;background:#e5f6fc;border-radius:9.9px;box-shadow:1px 2px 3px rgba(0,0,0,0.22)"></div><svg style="left:104.90px;top:495.10px" width="12" height="12" viewBox="0 0 12 12"><path d="M11 0.8L0.8 4.8 4.6 6.9 6.8 11z M4.6 6.9L11 0.8" fill="none" stroke="#222" stroke-width="1" stroke-linejoin="round"/></svg><div class="abs" style="left:120.30px;top:491.20px;height:19.80px;line-height:19.80px;font-size:9.75px;color:#222;white-space:nowrap">save_assign</div>
<div class="abs" style="left:97.90px;top:524.10px;width:129.90px;height:19.80px;border:1.7px solid #c6a3f0;background:#ede5f8;box-shadow:1px 2px 3px rgba(0,0,0,0.22)"></div><svg style="left:103.90px;top:528.00px" width="12" height="12" viewBox="0 0 12 12"><circle cx="6" cy="6" r="5.2" fill="#333"/></svg><div class="abs" style="left:119.40px;top:524.10px;height:19.80px;line-height:19.80px;font-size:9.75px;color:#222;white-space:nowrap">revoke_project_pp_btn</div>
<svg style="left:218.00px;top:536.20px" width="34.7" height="32.1" viewBox="551 587.2 34.7 32.1"><path d="M570.7 588.2H583.7V614.3H556" stroke="#888" stroke-width="1" fill="none"/><path d="M551 614.3l5.5 -2.6v5.2z" fill="#777"/></svg>
<div class="abs" style="left:98.40px;top:557.50px;width:110.10px;height:19.80px;border:1.8px solid #8ecde0;background:#e5f6fc;border-radius:9.9px;box-shadow:1px 2px 3px rgba(0,0,0,0.22)"></div><svg style="left:105.40px;top:561.40px" width="12" height="12" viewBox="0 0 12 12"><path d="M5 3.2A4 4 0 1 0 9 7.2" fill="none" stroke="#333" stroke-width="1"/><path d="M4.6 1.4v3.6L7.2 3.2z" fill="#333"/></svg><div class="abs" style="left:120.80px;top:557.50px;height:19.80px;line-height:19.80px;font-size:9.75px;color:#222;white-space:nowrap">revoke_project_pp</div>
<svg style="left:139.60px;top:579.00px" width="8" height="10.6"><path d="M4 0V6.6" stroke="#777" stroke-width="1" fill="none"/><path d="M1.6 5.1L4 9.6L6.4 5.1z" fill="#777"/></svg>
<div class="abs" style="left:98.40px;top:589.90px;width:136.50px;height:19.80px;border:1.8px solid #8ecde0;background:#e5f6fc;border-radius:9.9px;box-shadow:1px 2px 3px rgba(0,0,0,0.22)"></div><svg style="left:105.40px;top:593.80px" width="12" height="12" viewBox="0 0 12 12"><path d="M11 0.8L0.8 4.8 4.6 6.9 6.8 11z M4.6 6.9L11 0.8" fill="none" stroke="#222" stroke-width="1" stroke-linejoin="round"/></svg><div class="abs" style="left:120.80px;top:589.90px;height:19.80px;line-height:19.80px;font-size:9.75px;color:#222;white-space:nowrap">send_revoke_project_pp</div>
<svg style="left:59.00px;top:627.70px" width="8" height="10" viewBox="0 0 8 10"><path d="M1 0.8v8.4L7 5z" fill="none" stroke="#444" stroke-width="1"/></svg>
<div class="abs" style="left:73.90px;top:622.90px;width:130.90px;height:19.50px;border:1.7px solid #c6a3f0;background:#ede5f8;box-shadow:1px 2px 3px rgba(0,0,0,0.22)"></div><svg style="left:79.90px;top:626.65px" width="13" height="11" viewBox="0 0 13 11"><path d="M0.8 9.3V1.8h3.3l1.1 1.2h4.4v1.6M0.8 9.3l1.6-4.7h8.6l-1.6 4.7z" fill="none" stroke="#333" stroke-width="0.95" stroke-linejoin="round"/></svg><div class="abs" style="left:95.80px;top:622.90px;height:19.50px;line-height:19.50px;font-size:9.75px;color:#222;white-space:nowrap">Monitoring_Reports_pp</div>
<div class="abs" style="left:73.90px;top:655.10px;width:165.20px;height:19.90px;border:1.7px solid #c6a3f0;background:#ede5f8;box-shadow:1px 2px 3px rgba(0,0,0,0.22)"></div><svg style="left:79.90px;top:659.05px" width="13" height="11" viewBox="0 0 13 11"><path d="M0.8 9.3V1.8h3.3l1.1 1.2h4.4v1.6M0.8 9.3l1.6-4.7h8.6l-1.6 4.7z" fill="none" stroke="#333" stroke-width="0.95" stroke-linejoin="round"/></svg><div class="abs" style="left:94.40px;top:655.10px;height:19.90px;line-height:19.90px;font-size:9.75px;color:#222;white-space:nowrap"></div>
<div class="abs" style="left:528.00px;top:174.00px;width:4.6px;height:407px;background:rgba(140,140,140,0.6);border-radius:2.3px"></div>
<div class="abs" style="left:0;top:0;width:533px;height:19px;background:#d2d2d2"></div>
<div class="abs" style="left:1px;top:0;width:60.5px;height:19px;background:#fff"></div>
<svg style="left:6.90px;top:4.90px" width="10.2" height="10.2" viewBox="0 0 10.2 10.2"><rect x="0.7" y="0.7" width="8.8" height="8.8" rx="1.6" fill="#dfe1f5" stroke="#8c92d8" stroke-width="1"/><path d="M2.8 3h4.6M2.8 4.9h4.6M2.8 6.8h2.4" stroke="#8c92d8" stroke-width="1"/><rect x="6.2" y="6.4" width="2" height="2" fill="#fff"/></svg>
<div class="abs" style="left:24.9px;top:3.5px;font-size:9.6px;font-weight:bold;color:#3a3a3a;line-height:12px">Policy</div>
<div class="abs" style="left:514px;top:0;width:19px;height:19px;border-left:1px solid #bdbdbd;background:#d2d2d2"></div>
<svg style="left:516.80px;top:3.00px" width="14" height="14" viewBox="0 0 24 24" fill="none" stroke="#555" stroke-width="1.7" stroke-linecap="round" stroke-linejoin="round"><g transform="translate(24 0) scale(-1 1)"><circle cx="13.5" cy="6.5" r=".6" fill="#555"/><circle cx="17.5" cy="10.5" r=".6" fill="#555"/><circle cx="8.5" cy="7.5" r=".6" fill="#555"/><circle cx="6.5" cy="12.5" r=".6" fill="#555"/><path d="M12 2C6.5 2 2 6.5 2 12s4.5 10 10 10c.926 0 1.648-.746 1.648-1.688 0-.437-.18-.835-.437-1.125-.29-.289-.438-.652-.438-1.125a1.64 1.64 0 0 1 1.668-1.668h1.996c3.051 0 5.555-2.503 5.555-5.554C21.965 6.012 17.461 2 12 2z"/></g></svg></div>
<div id="rtop"><div class="abs" style="left:0.50px;top:0;width:53.30px;height:18.5px;background:#e6e6e6;font-size:9.6px;font-weight:bold;color:#444;text-align:left;padding-left:4.2px;line-height:18.5px;white-space:nowrap">Descri...</div>
<div class="abs" style="left:53.80px;top:0;width:53.30px;height:18.5px;background:#e6e6e6;border-left:1px solid #d4d4d4;font-size:9.6px;font-weight:bold;color:#444;text-align:center;line-height:18.5px;white-space:nowrap">Roles</div>
<div class="abs" style="left:107.10px;top:0;width:53.30px;height:18.5px;background:#e6e6e6;border-left:1px solid #d4d4d4;font-size:9.6px;font-weight:bold;color:#444;text-align:left;padding-left:4.2px;line-height:18.5px;white-space:nowrap">Naviga...</div>
<div class="abs" style="left:160.40px;top:0;width:53.30px;height:18.5px;background:#e6e6e6;border-left:1px solid #d4d4d4;font-size:9.6px;font-weight:bold;color:#444;text-align:center;line-height:18.5px;white-space:nowrap">Groups</div>
<div class="abs" style="left:213.70px;top:0;width:53.30px;height:18.5px;background:#fff;border-left:1px solid #d4d4d4;font-size:9.6px;font-weight:bold;color:#444;text-align:center;line-height:18.5px;white-space:nowrap">Topics</div>
<div class="abs" style="left:267.00px;top:0;width:53.30px;height:18.5px;background:#e6e6e6;border-left:1px solid #d4d4d4;font-size:9.6px;font-weight:bold;color:#444;text-align:center;line-height:18.5px;white-space:nowrap">Tokens</div>
<div class="abs" style="left:320.3px;top:0;width:19.7px;height:18.5px;background:#e6e6e6;border-left:1px solid #d4d4d4"></div>
<svg style="left:323.00px;top:1.50px" width="14" height="14" viewBox="0 0 14 14" fill="none" stroke="#444" stroke-width="1.1"><path d="M13 1L8.3 5.7M8.3 1.8v3.9h3.9"/><path d="M1 13l4.7-4.7M5.7 12.2V8.3H1.8"/></svg>
<div class="abs" style="left:0;top:18.5px;width:340px;height:2.5px;background:#fff"></div>
<div class="abs" style="left:0;top:21px;width:340px;height:1px;background:#cfcfcf"></div>
<svg style="left:3px;top:29.8px" width="9" height="7" viewBox="0 0 9 7"><path d="M0.6 0.8h7.6L4.4 6.4z" fill="none" stroke="#444" stroke-width="0.95"/></svg>
<div class="abs" style="left:19px;top:26.7px;font-size:9.6px;font-weight:bold;color:#444;line-height:12px">Topic</div>
<div class="abs" style="left:110.5px;top:26.7px;font-size:9.6px;color:#777;line-height:12px">Project</div>
<svg style="left:319.5px;top:26.5px" width="11" height="12" viewBox="0 0 11 12" fill="none" stroke="#e53935" stroke-width="1.1"><path d="M0.8 3h9.4M3.2 3V1.2h4.6V3M1.8 3l.6 8.2h6.2l.6-8.2"/><path d="M4.4 5.3v3.8M6.6 5.3v3.8"/></svg>
<div class="abs" style="left:14.80px;top:45.00px;width:95.6px;height:23.20px;background:#f4f4f4"></div>
<div class="abs" style="left:26.80px;top:44.20px;height:23.20px;line-height:23.20px;font-size:9.6px;color:#161616;white-space:nowrap">Name</div>
<div class="abs" style="left:110.40px;top:45.00px;width:222.60px;height:23.20px;background:#fff;border:1px solid #cfcfcf;border-radius:2px"></div>
<div class="abs" style="left:114.50px;top:45.00px;height:23.20px;line-height:23.20px;font-size:9.5px;color:#666;white-space:nowrap">Project</div>
<div class="abs" style="left:14.80px;top:69.90px;width:95.6px;height:23.20px;background:#fff"></div>
<div class="abs" style="left:26.80px;top:69.10px;height:23.20px;line-height:23.20px;font-size:9.6px;color:#161616;white-space:nowrap">Description</div>
<div class="abs" style="left:110.40px;top:69.90px;width:222.60px;height:23.20px;background:#fff;border:1px solid #cfcfcf;border-radius:2px"></div>
<div class="abs" style="left:14.80px;top:94.90px;width:95.6px;height:23.20px;background:#f4f4f4"></div>
<div class="abs" style="left:26.80px;top:94.10px;height:23.20px;line-height:23.20px;font-size:9.6px;color:#161616;white-space:nowrap">Type</div>
<div class="abs" style="left:110.40px;top:94.90px;width:222.60px;height:23.20px;background:#fff;border:1px solid #cfcfcf;border-radius:2px"></div>
<div class="abs" style="left:115.80px;top:94.90px;height:23.20px;line-height:23.20px;font-size:9.5px;color:#555;white-space:nowrap">Any</div>
<svg style="left:316.00px;top:104.50px" width="10" height="6" viewBox="0 0 10 6"><path d="M0.8 0.8L5 5 9.2 0.8" fill="none" stroke="#555" stroke-width="1"/></svg>
<div class="abs" style="left:14.80px;top:119.90px;width:95.6px;height:23.20px;background:#fff;border-right:1.2px solid #e2e2e2"></div>
<div class="abs" style="left:26.80px;top:119.10px;height:23.20px;line-height:23.20px;font-size:9.6px;color:#161616;white-space:nowrap">Static</div>
<div class="abs" style="left:110.40px;top:119.90px;width:222.60px;height:23.20px;background:#fff"></div>
<svg style="left:118.00px;top:126.50px" width="10" height="10" viewBox="0 0 10 10"><rect x="0" y="0" width="10" height="10" rx="1.6" fill="#2a6ee8"/><path d="M2.2 5.2l1.9 1.9 3.8-4.2" fill="none" stroke="#fff" stroke-width="1.3"/></svg>
<div class="abs" style="left:14.80px;top:145.00px;width:95.6px;height:23.20px;background:#f4f4f4"></div>
<div class="abs" style="left:26.80px;top:144.20px;height:23.20px;line-height:23.20px;font-size:9.6px;color:#161616;white-space:nowrap">Memo Paramete...</div>
<div class="abs" style="left:110.40px;top:145.00px;width:222.60px;height:23.20px;background:#fff;border:1px solid #cfcfcf;border-radius:2px"></div>
<div class="abs" style="left:115.80px;top:145.00px;height:23.20px;line-height:23.20px;font-size:9.5px;color:#555;white-space:nowrap">Topic Config</div>
<svg style="left:316.00px;top:154.60px" width="10" height="6" viewBox="0 0 10 6"><path d="M0.8 0.8L5 5 9.2 0.8" fill="none" stroke="#555" stroke-width="1"/></svg>
<div class="abs" style="left:14.80px;top:169.90px;width:95.6px;height:23.20px;background:#fff"></div>
<div class="abs" style="left:26.80px;top:169.10px;height:23.20px;line-height:23.20px;font-size:9.6px;color:#161616;white-space:nowrap">Memo</div>
<div class="abs" style="left:110.40px;top:169.90px;width:222.60px;height:23.20px;background:#fff;border:1px solid #cfcfcf;border-radius:2px"></div>
<div class="abs" style="left:14.799999999999955px;top:195.6px;width:318.20000000000005px;height:10px;background:#fff"></div>
<div class="abs" style="left:0;top:194.2px;width:335px;height:1px;background:#d6d6d6"></div>
<div class="abs" style="left:334.70000000000005px;top:22px;width:5.3px;height:181px;background:#fff"></div>
<div class="abs" style="left:335.4000000000001px;top:22.5px;width:4.4px;height:163.2px;background:#b3b3b3;border-radius:2.2px"></div></div><div id="rbot"><div class="abs" style="left:0.00px;top:0;width:80.00px;height:18.5px;background:#fff;font-size:9.6px;font-weight:bold;color:#444;text-align:center;line-height:18.5px;white-space:nowrap">Properties</div>
<div class="abs" style="left:80.00px;top:0;width:80.00px;height:18.5px;background:#e6e6e6;border-left:1px solid #d4d4d4;font-size:9.6px;font-weight:bold;color:#444;text-align:center;line-height:18.5px;white-space:nowrap">Events</div>
<div class="abs" style="left:160.00px;top:0;width:80.00px;height:18.5px;background:#e6e6e6;border-left:1px solid #d4d4d4;font-size:9.6px;font-weight:bold;color:#444;text-align:center;line-height:18.5px;white-space:nowrap">Artifacts</div>
<div class="abs" style="left:240.00px;top:0;width:80.00px;height:18.5px;background:#e6e6e6;border-left:1px solid #d4d4d4;font-size:9.6px;font-weight:bold;color:#444;text-align:center;line-height:18.5px;white-space:nowrap">Json</div>
<div class="abs" style="left:320px;top:0;width:20px;height:18.5px;background:#e6e6e6;border-left:1px solid #d4d4d4"></div>
<svg style="left:323.00px;top:2.00px" width="14" height="14" viewBox="0 0 14 14" fill="none" stroke="#444" stroke-width="1.1"><path d="M13 1L8.3 5.7M8.3 1.8v3.9h3.9"/><path d="M1 13l4.7-4.7M5.7 12.2V8.3H1.8"/></svg>
<div class="abs" style="left:0;top:18.5px;width:340px;height:2.5px;background:#fff"></div>
<div class="abs" style="left:0;top:21px;width:340px;height:1px;background:#cfcfcf"></div>
<svg style="left:3.8px;top:28.6px" width="7" height="8" viewBox="0 0 7 8"><path d="M0.6 0.6v6.8L6.2 4z" fill="none" stroke="#444" stroke-width="0.95"/></svg>
<div class="abs" style="left:18.299999999999955px;top:26.6px;font-size:9.6px;font-weight:bold;color:#444;line-height:12px">About</div>
<div class="abs" style="left:0;top:43.39999999999998px;width:340px;height:1px;background:#d8d8d8"></div>
<svg style="left:3.2px;top:52px" width="8" height="7" viewBox="0 0 8 7"><path d="M0.6 0.8h6.8L4 6.2z" fill="none" stroke="#444" stroke-width="0.95"/></svg>
<div class="abs" style="left:18.299999999999955px;top:49px;font-size:9.6px;font-weight:bold;color:#444;line-height:12px">Meta Data</div>
<div class="abs" style="left:14.80px;top:67.20px;width:95.6px;height:23.40px;background:#fff"></div>
<div class="abs" style="left:20.80px;top:66.40px;height:23.40px;line-height:23.40px;font-size:9.6px;color:#161616;white-space:nowrap">Tag</div>
<div class="abs" style="left:110.40px;top:67.20px;width:222.60px;height:23.40px;background:#fff;border:1px solid #cfcfcf;border-radius:2px"></div>
<div class="abs" style="left:114.50px;top:67.20px;height:23.40px;line-height:23.40px;font-size:9.5px;color:#666;white-space:nowrap">update_project_bnt</div>
<div class="abs" style="left:14.80px;top:92.30px;width:95.6px;height:23.40px;background:#f4f4f4"></div>
<div class="abs" style="left:20.80px;top:91.50px;height:23.40px;line-height:23.40px;font-size:9.6px;color:#161616;white-space:nowrap">Permissions</div>
<div class="abs" style="left:110.40px;top:92.30px;width:222.60px;height:23.40px;background:#fff;border:1px solid #cfcfcf;border-radius:2px"></div>
<div class="abs" style="left:115.80px;top:92.30px;height:23.40px;line-height:23.40px;font-size:9.5px;color:#2a2a2a;white-space:nowrap">Project_Proponent</div>
<svg style="left:316.00px;top:102.00px" width="10" height="6" viewBox="0 0 10 6"><path d="M0.8 0.8L5 5 9.2 0.8" fill="none" stroke="#555" stroke-width="1"/></svg>
<div class="abs" style="left:14.80px;top:117.00px;width:318.2px;height:23.4px;background:#fff"></div>
<div class="abs" style="left:18.30px;top:119.80px;width:310.6px;height:17.8px;border:1px solid #7a86e2;border-radius:3px;background:#fff;font-size:7.3px;color:#3c44a4;text-align:center;line-height:15.8px">Apply permissions to children</div>
<div class="abs" style="left:14.80px;top:141.50px;width:95.6px;height:23.60px;background:#f4f4f4;border-right:1.2px solid #e2e2e2"></div>
<div class="abs" style="left:20.80px;top:140.70px;height:23.60px;line-height:23.60px;font-size:9.6px;color:#161616;white-space:nowrap">Default Active</div>
<div class="abs" style="left:110.40px;top:141.50px;width:222.60px;height:23.60px;background:#f4f4f4"></div>
<svg style="left:118.00px;top:148.30px" width="10" height="10" viewBox="0 0 10 10"><rect x="0" y="0" width="10" height="10" rx="1.6" fill="#2a6ee8"/><path d="M2.2 5.2l1.9 1.9 3.8-4.2" fill="none" stroke="#fff" stroke-width="1.3"/></svg>
<div class="abs" style="left:14.80px;top:166.40px;width:95.6px;height:23.60px;background:#fff;border-right:1.2px solid #e2e2e2"></div>
<div class="abs" style="left:20.80px;top:165.60px;height:23.60px;line-height:23.60px;font-size:9.6px;color:#161616;white-space:nowrap">Stop Propagation</div>
<div class="abs" style="left:110.40px;top:166.40px;width:222.60px;height:23.60px;background:#fff"></div>
<svg style="left:118.00px;top:173.20px" width="10" height="10" viewBox="0 0 10 10"><rect x="0.5" y="0.5" width="9" height="9" rx="1.8" fill="#fff" stroke="#bdbdbd" stroke-width="1"/></svg>
<div class="abs" style="left:14.80px;top:191.70px;width:95.6px;height:23.60px;background:#f4f4f4"></div>
<div class="abs" style="left:20.80px;top:190.90px;height:23.60px;line-height:23.60px;font-size:9.6px;color:#161616;white-space:nowrap">On errors</div>
<div class="abs" style="left:110.40px;top:191.70px;width:222.60px;height:23.60px;background:#fff;border:1px solid #cfcfcf;border-radius:2px"></div>
<div class="abs" style="left:115.80px;top:191.70px;height:23.60px;line-height:23.60px;font-size:9.5px;color:#555;white-space:nowrap">No action</div>
<svg style="left:316.00px;top:201.50px" width="10" height="6" viewBox="0 0 10 6"><path d="M0.8 0.8L5 5 9.2 0.8" fill="none" stroke="#555" stroke-width="1"/></svg>
<div class="abs" style="left:14.80px;top:217.50px;width:95.6px;height:23.60px;background:#fff"></div>
<div class="abs" style="left:20.80px;top:216.70px;height:23.60px;line-height:23.60px;font-size:9.6px;color:#161616;white-space:nowrap">Schema</div>
<div class="abs" style="left:110.40px;top:217.50px;width:222.60px;height:23.60px;background:#fff;border:1px solid #cfcfcf;border-radius:2px"></div>
<div class="abs" style="left:115.80px;top:217.50px;height:23.60px;line-height:23.60px;font-size:9.5px;color:#555;white-space:nowrap">Project Description (Auto) (1.0.0) (Publishe...</div>
<svg style="left:316.00px;top:227.30px" width="10" height="6" viewBox="0 0 10 6"><path d="M0.8 0.8L5 5 9.2 0.8" fill="none" stroke="#555" stroke-width="1"/></svg>
<div class="abs" style="left:14.80px;top:242.50px;width:95.6px;height:23.60px;background:#f4f4f4"></div>
<div class="abs" style="left:20.80px;top:241.70px;height:23.60px;line-height:23.60px;font-size:9.6px;color:#161616;white-space:nowrap">Id Type</div>
<div class="abs" style="left:110.40px;top:242.50px;width:222.60px;height:23.60px;background:#fff;border:1px solid #cfcfcf;border-radius:2px"></div>
<div class="abs" style="left:115.80px;top:242.50px;height:23.60px;line-height:23.60px;font-size:9.5px;color:#555;white-space:nowrap">UUID (New UUID)</div>
<svg style="left:316.00px;top:252.30px" width="10" height="6" viewBox="0 0 10 6"><path d="M0.8 0.8L5 5 9.2 0.8" fill="none" stroke="#555" stroke-width="1"/></svg>
<div class="abs" style="left:14.80px;top:267.50px;width:95.6px;height:23.60px;background:#fff"></div>
<div class="abs" style="left:20.80px;top:266.70px;height:23.60px;line-height:23.60px;font-size:9.6px;color:#161616;white-space:nowrap">Edit type</div>
<div class="abs" style="left:110.40px;top:267.50px;width:222.60px;height:23.60px;background:#fff;border:1px solid #cfcfcf;border-radius:2px"></div>
<div class="abs" style="left:115.80px;top:267.50px;height:23.60px;line-height:23.60px;font-size:9.5px;color:#555;white-space:nowrap">Edit</div>
<svg style="left:316.00px;top:277.30px" width="10" height="6" viewBox="0 0 10 6"><path d="M0.8 0.8L5 5 9.2 0.8" fill="none" stroke="#555" stroke-width="1"/></svg>
<div class="abs" style="left:14.80px;top:292.40px;width:95.6px;height:23.60px;background:#f4f4f4;border-right:1.2px solid #e2e2e2"></div>
<div class="abs" style="left:20.80px;top:291.60px;height:23.60px;line-height:23.60px;font-size:9.6px;color:#161616;white-space:nowrap">Custom Relayer A...</div>
<div class="abs" style="left:110.40px;top:292.40px;width:222.60px;height:23.60px;background:#f4f4f4"></div>
<svg style="left:118.00px;top:299.20px" width="10" height="10" viewBox="0 0 10 10"><rect x="0.5" y="0.5" width="9" height="9" rx="1.8" fill="#fff" stroke="#bdbdbd" stroke-width="1"/></svg>
<div class="abs" style="left:14.80px;top:317.40px;width:95.6px;height:23.60px;background:#fff;border-right:1.2px solid #e2e2e2"></div>
<div class="abs" style="left:20.80px;top:316.60px;height:23.60px;line-height:23.60px;font-size:9.6px;color:#161616;white-space:nowrap">Preset</div>
<div class="abs" style="left:110.40px;top:317.40px;width:222.60px;height:23.60px;background:#fff"></div>
<svg style="left:118.00px;top:324.20px" width="10" height="10" viewBox="0 0 10 10"><rect x="0.5" y="0.5" width="9" height="9" rx="1.8" fill="#fff" stroke="#bdbdbd" stroke-width="1"/></svg>
<div class="abs" style="left:0;top:341.6px;width:340px;height:1px;background:#d8d8d8"></div>
<svg style="left:3.6px;top:350.20000000000005px" width="8" height="7" viewBox="0 0 8 7"><path d="M0.6 0.8h6.8L4 6.2z" fill="none" stroke="#444" stroke-width="0.95"/></svg>
<div class="abs" style="left:18.600000000000023px;top:347px;font-size:9.6px;color:#333;line-height:12px">UI</div>
<div class="abs" style="left:14.80px;top:364.80px;width:95.6px;height:23.60px;background:#fff"></div>
<div class="abs" style="left:20.80px;top:364.00px;height:23.60px;line-height:23.60px;font-size:9.6px;color:#161616;white-space:nowrap">Type</div>
<div class="abs" style="left:110.40px;top:364.80px;width:222.60px;height:23.60px;background:#fff;border:1px solid #cfcfcf;border-radius:2px"></div>
<div class="abs" style="left:115.80px;top:364.80px;height:23.60px;line-height:23.60px;font-size:9.5px;color:#555;white-space:nowrap">DIALOG</div>
<svg style="left:316.00px;top:374.60px" width="10" height="6" viewBox="0 0 10 6"><path d="M0.8 0.8L5 5 9.2 0.8" fill="none" stroke="#555" stroke-width="1"/></svg>
<div class="abs" style="left:14.80px;top:389.30px;width:95.6px;height:23.60px;background:#f4f4f4"></div>
<div class="abs" style="left:20.80px;top:388.50px;height:23.60px;line-height:23.60px;font-size:9.6px;color:#161616;white-space:nowrap">Title</div>
<div class="abs" style="left:110.40px;top:389.30px;width:222.60px;height:23.60px;background:#fff;border:1px solid #cfcfcf;border-radius:2px"></div>
<div class="abs" style="left:14.80px;top:414.20px;width:95.6px;height:23.60px;background:#fff"></div>
<div class="abs" style="left:20.80px;top:413.40px;height:23.60px;line-height:23.60px;font-size:9.6px;color:#161616;white-space:nowrap">Button Content</div>
<div class="abs" style="left:110.40px;top:414.20px;width:222.60px;height:23.60px;background:#fff;border:1px solid #cfcfcf;border-radius:2px"></div>
<div class="abs" style="left:114.50px;top:414.20px;height:23.60px;line-height:23.60px;font-size:9.5px;color:#666;white-space:nowrap">New project</div>
<div class="abs" style="left:14.80px;top:439.10px;width:95.6px;height:23.60px;background:#f4f4f4"></div>
<div class="abs" style="left:20.80px;top:438.30px;height:23.60px;line-height:23.60px;font-size:9.6px;color:#161616;white-space:nowrap">Button Class</div>
<div class="abs" style="left:110.40px;top:439.10px;width:222.60px;height:23.60px;background:#fff;border:1px solid #cfcfcf;border-radius:2px"></div>
<div class="abs" style="left:334.70000000000005px;top:22px;width:5.3px;height:429px;background:#fff"></div>
<div class="abs" style="left:335.0999999999999px;top:22.100000000000023px;width:4.8px;height:311.4px;background:#b3b3b3;border-radius:2.4px"></div></div>
</body></html>
